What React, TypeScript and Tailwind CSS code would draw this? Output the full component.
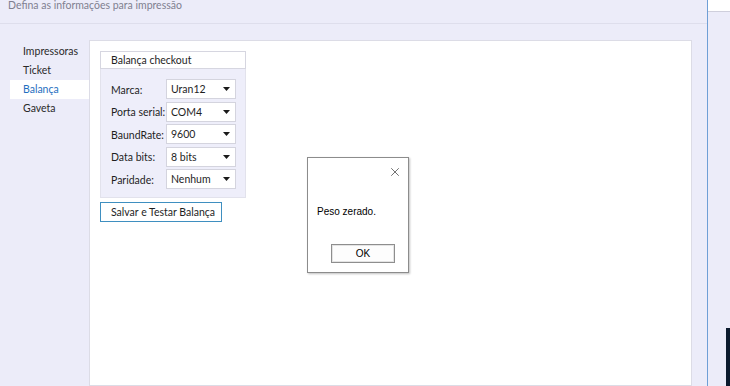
import { X } from "lucide-react";

const fields = [
  { label: "Marca:", value: "Uran12" },
  { label: "Porta serial:", value: "COM4" },
  { label: "BaundRate:", value: "9600" },
  { label: "Data bits:", value: "8 bits" },
  { label: "Paridade:", value: "Nenhum" },
];

const menu = ["Impressoras", "Ticket", "Balança", "Gaveta"];

function Caret() {
  return (
    <svg width="7" height="4" viewBox="0 0 7 4" className="shrink-0">
      <path d="M0 0 H7 L3.5 4 Z" fill="#1a1a1a" />
    </svg>
  );
}

export default function App() {
  return (
    <div
      className="relative flex h-[386px] w-[730px] overflow-hidden whitespace-nowrap bg-[#ececf9] text-[10.5px] text-[#1e1e1e]"
      style={{ fontFamily: "Lato, 'Noto Sans', sans-serif" }}
    >
      {/* Main window area */}
      <div className="flex w-[707px] flex-col">
        <div className="flex h-[24px] items-start border-b border-[#dedeec] pl-[8px] leading-[11px] text-[#808090]">
          <span>Defina as informações para impressão</span>
        </div>

        <div className="flex flex-1">
          {/* Sidebar */}
          <div className="flex w-[89px] flex-col pt-[18px]">
            {menu.map((item) => (
              <div
                key={item}
                className={`ml-[10px] flex h-[19px] items-center pl-[13px] ${
                  item === "Balança" ? "bg-white text-[#1f6fbf]" : "text-[#2a2a2a]"
                }`}
              >
                {item}
              </div>
            ))}
          </div>

          {/* Content panel */}
          <div className="mr-[15px] mt-[16px] flex flex-1 flex-col items-start border border-[#dcdce6] bg-white pl-[10px] pt-[10px]">
            <div className="flex w-[146px] flex-col">
              <div className="flex h-[18px] items-center border border-[#d6d6e0] bg-white pl-[10px] pt-[2px]">
                Balança checkout
              </div>
              <div className="flex flex-col gap-[2.5px] border-x border-b border-[#e2e2ec] bg-[#eeeefa] pb-[8px] pl-[10px] pt-[10px]">
                {fields.map((f) => (
                  <div key={f.label} className="flex h-[20px] items-center">
                    <span className="w-[55px] pt-[3px]">{f.label}</span>
                    <div className="flex h-[20px] w-[70px] items-center justify-between border border-[#d4d4de] bg-white pl-[4px] pr-[5px]">
                      <span className="pt-[2px]">{f.value}</span>
                      <Caret />
                    </div>
                  </div>
                ))}
              </div>
            </div>

            <button className="mt-[4px] flex h-[20px] w-[122px] items-center border border-[#3f8fc0] bg-white pl-[10px] pt-[1px]">
              Salvar e Testar Balança
            </button>
          </div>
        </div>
      </div>

      {/* Window edge */}
      <div className="w-px bg-[#6f9fd6]" />

      {/* Neighbouring window */}
      <div className="flex flex-1 flex-col">
        <div className="h-[12px] border-b border-[#cfcfdc] bg-white" />
        <div className="flex flex-1 flex-col items-end justify-end">
          <div className="h-[58px] w-[4px] bg-[#0b1a2e]" />
        </div>
      </div>

      {/* Message box */}
      <div
        className="absolute left-[307px] top-[157px] flex h-[116px] w-[102px] flex-col border border-[#8c8c8c] bg-white shadow-[1px_1px_2px_rgba(0,0,0,0.25)]"
        style={{ fontFamily: "'Liberation Sans', Arial, sans-serif" }}
      >
        <div className="flex justify-end pr-[6px] pt-[7px]">
          <X size={14} strokeWidth={1.1} color="#222" />
        </div>
        <div className="pl-[9px] pt-[25px] text-[10px] text-black">Peso zerado.</div>
        <div className="mt-[25px] flex pl-[23px]">
          <div className="flex h-[19px] w-[64px] items-center justify-center border border-[#8e8e8e] bg-[#fdfdfd] text-[10px] text-black shadow-[inset_0_0_0_1px_#e4e4e4]">
            OK
          </div>
        </div>
      </div>
    </div>
  );
}
